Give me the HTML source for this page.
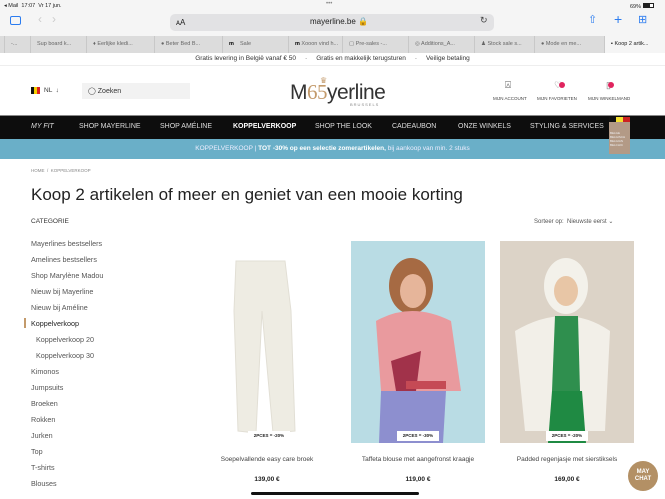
<!DOCTYPE html>
<html><head><meta charset="utf-8"><style>
*{margin:0;padding:0;box-sizing:border-box}
body{width:665px;height:499px;overflow:hidden;background:#fff;font-family:"Liberation Sans",sans-serif;color:#222;position:relative}
.a{position:absolute;white-space:nowrap}
.cat{font-size:7.2px;color:#555}
.nav span{position:absolute;top:123px;font-size:7px;color:#ddd}
.tab{position:absolute;top:36px;height:17px;border-left:1px solid #c8c8c8;font-size:5.5px;color:#666;line-height:17px;padding-left:6px}
</style></head><body>
<div class="a" style="left:0;top:0;width:665px;height:36px;background:#f5f5f5"></div>
<div class="a" style="left:4px;top:3px;font-size:5.5px;color:#222">◂ Mail &nbsp;17:07 &nbsp;Vr 17 jun.</div>
<div class="a" style="left:326px;top:1px;font-size:6px;color:#888">•••</div>
<div class="a" style="left:630px;top:3px;font-size:5.5px">69% <span style="display:inline-block;width:11px;height:5px;border:1px solid #222;background:linear-gradient(90deg,#222 65%,#fff 65%)"></span></div>
<div class="a" style="left:10px;top:16px;width:11px;height:9px;border:1.3px solid #2b7cf0;border-radius:2px"></div>
<div class="a" style="left:38px;top:12px;font-size:12px;color:#ccc">‹ &nbsp; ›</div>
<div class="a" style="left:170px;top:14px;width:324px;height:17px;background:#e2e2e4;border-radius:5px"></div>
<div class="a" style="left:176px;top:18px;font-size:8px">ᴀA</div>
<div class="a" style="left:310px;top:17px;font-size:8px;color:#222">mayerline.be 🔒</div>
<div class="a" style="left:480px;top:15px;font-size:9px;color:#444">↻</div>
<div class="a" style="left:588px;top:13px;font-size:11px;color:#2b7cf0">⇧</div>
<div class="a" style="left:614px;top:11px;font-size:14px;color:#2b7cf0">+</div>
<div class="a" style="left:638px;top:13px;font-size:11px;color:#2b7cf0">⊞</div>
<div class="a" style="left:0;top:36px;width:665px;height:17px;background:#dcdcdc"></div>
<div class="tab" style="left:4px;width:26px">-...</div>
<div class="tab" style="left:30px;width:56px">Sup board k...</div>
<div class="tab" style="left:86px;width:68px">♦ Eerlijke kledi...</div>
<div class="tab" style="left:154px;width:68px">● Beter Bed B...</div>
<div class="tab" style="left:222px;width:66px"><b style="color:#000">m</b> &nbsp;&nbsp;&nbsp;Sale</div>
<div class="tab" style="left:288px;width:66px"><b style="color:#000">m</b> Xooon vind h...</div>
<div class="tab" style="left:342px;width:66px">▢ Pre-sales -...</div>
<div class="tab" style="left:408px;width:66px">◎ Additions_A...</div>
<div class="tab" style="left:474px;width:60px">♟ Stock sale s...</div>
<div class="tab" style="left:534px;width:70px">● Mode en me...</div>
<div class="tab" style="left:604px;width:61px;background:#f5f5f5;color:#222">▪ Koop 2 artik...</div>
<div class="a" style="left:0;top:53px;width:665px;height:13px;border-bottom:1px solid #eee;font-size:6.5px;color:#333;text-align:center;line-height:12px">Gratis levering in België vanaf € 50 &nbsp;&nbsp;&nbsp;&nbsp;·&nbsp;&nbsp;&nbsp;&nbsp; Gratis en makkelijk terugsturen &nbsp;&nbsp;&nbsp;&nbsp;·&nbsp;&nbsp;&nbsp;&nbsp; Veilige betaling</div>
<div class="a" style="left:31px;top:87px;width:9px;height:7px;background:linear-gradient(90deg,#111 33%,#f5d000 33% 66%,#d22 66%)"></div>
<div class="a" style="left:44px;top:87px;font-size:6.5px;color:#333">NL &nbsp;↓</div>
<div class="a" style="left:82px;top:83px;width:108px;height:16px;background:#f2f2f2"></div>
<div class="a" style="left:88px;top:87px;font-size:7px;color:#333">◯ Zoeken</div>
<div class="a" style="left:290px;top:80px;font-size:21px;color:#333;letter-spacing:-0.5px">M<span style="color:#c39a6b;font-family:'Liberation Serif',serif">65</span>yerline</div>
<div class="a" style="left:320px;top:76px;font-size:8px;color:#c39a6b">♛</div>
<div class="a" style="left:350px;top:102px;font-size:4px;letter-spacing:1px;color:#888">BRUSSELS</div>
<div class="a" style="left:505px;top:80px;font-size:10px;color:#555">⍓</div>
<div class="a" style="left:493px;top:96px;font-size:4.5px;color:#444">MIJN ACCOUNT</div>
<div class="a" style="left:554px;top:80px;font-size:9px;color:#777">♡<span style="display:inline-block;width:6px;height:6px;border-radius:3px;background:#e0245e;margin-left:-3px"></span></div>
<div class="a" style="left:537px;top:96px;font-size:4.5px;color:#444">MIJN FAVORIETEN</div>
<div class="a" style="left:606px;top:80px;font-size:9px;color:#777">▯<span style="display:inline-block;width:6px;height:6px;border-radius:3px;background:#e0245e;margin-left:-3px"></span></div>
<div class="a" style="left:588px;top:96px;font-size:4.5px;color:#444">MIJN WINKELMAND</div>
<div class="a" style="left:0;top:115px;width:665px;height:24px;background:#0d0d0d;border-top:1px solid #888"></div>
<div class="nav">
<span style="left:31px;font-style:italic">MY FIT</span>
<span style="left:79px">SHOP MAYERLINE</span>
<span style="left:160px">SHOP AMÉLINE</span>
<span style="left:233px;color:#fff;font-weight:bold">KOPPELVERKOOP</span>
<span style="left:315px">SHOP THE LOOK</span>
<span style="left:392px">CADEAUBON</span>
<span style="left:458px">ONZE WINKELS</span>
<span style="left:530px">STYLING &amp; SERVICES</span>
</div>
<div class="a" style="left:0;top:139px;width:665px;height:20px;background:#6aafc8;font-size:6.5px;color:#eef;text-align:center;line-height:20px">KOPPELVERKOOP | <b style="color:#fff">TOT -30% op een selectie zomerartikelen,</b> bij aankoop van min. 2 stuks</div>
<div class="a" style="left:609px;top:117px;width:21px;height:37px;background:#b39a86"></div>
<div class="a" style="left:609px;top:117px;width:21px;height:5px;background:linear-gradient(90deg,#111 33%,#f5e030 33% 66%,#c22 66%)"></div>
<div class="a" style="left:610px;top:131px;font-size:3px;line-height:4px;color:#eee">BELGE<br>BELGISCH<br>BELGIAN<br>BELCHIC</div>
<div class="a" style="left:31px;top:168px;font-size:4.5px;color:#888">HOME &nbsp;/ &nbsp;KOPPELVERKOOP</div>
<div class="a" style="left:31px;top:185px;font-size:17px;color:#222">Koop 2 artikelen of meer en geniet van een mooie korting</div>
<div class="a" style="left:31px;top:218px;font-size:6.5px;color:#333">CATEGORIE</div>
<div class="a" style="left:534px;top:218px;font-size:6px;color:#555">Sorteer op: &nbsp;Nieuwste eerst ⌄</div>
<div class="a cat" style="left:31px;top:239px">Mayerlines bestsellers</div>
<div class="a cat" style="left:31px;top:255px">Amelines bestsellers</div>
<div class="a cat" style="left:31px;top:271px">Shop Marylène Madou</div>
<div class="a cat" style="left:31px;top:287px">Nieuw bij Mayerline</div>
<div class="a cat" style="left:31px;top:303px">Nieuw bij Améline</div>
<div class="a" style="left:24px;top:318px;width:2px;height:10px;background:#c39a6b"></div>
<div class="a cat" style="left:31px;top:319px;color:#222">Koppelverkoop</div>
<div class="a cat" style="left:36px;top:335px">Koppelverkoop 20</div>
<div class="a cat" style="left:36px;top:351px">Koppelverkoop 30</div>
<div class="a cat" style="left:31px;top:367px">Kimonos</div>
<div class="a cat" style="left:31px;top:383px">Jumpsuits</div>
<div class="a cat" style="left:31px;top:399px">Broeken</div>
<div class="a cat" style="left:31px;top:415px">Rokken</div>
<div class="a cat" style="left:31px;top:431px">Jurken</div>
<div class="a cat" style="left:31px;top:447px">Top</div>
<div class="a cat" style="left:31px;top:463px">T-shirts</div>
<div class="a cat" style="left:31px;top:479px">Blouses</div>
<svg class="a" style="left:200px;top:241px" width="134" height="202"><path d="M36 20 L85 20 L91 70 L95 190 L73 192 L62 70 L56 192 L38 190 L34 70 Z" fill="#eeece3" stroke="#e2dfd5"/></svg>
<div class="a" style="left:351px;top:241px;width:134px;height:202px;background:#b9dce4"></div>
<svg class="a" style="left:351px;top:241px" width="134" height="202"><ellipse cx="60" cy="45" rx="22" ry="28" fill="#a66a43"/><ellipse cx="62" cy="50" rx="13" ry="17" fill="#e6b59a"/><path d="M25 80 Q60 60 100 80 L110 150 L90 150 L85 202 L30 202 L30 150 Z" fill="#e99a9e"/><path d="M30 150 L95 150 L92 202 L28 202 Z" fill="#8d8fcf"/><path d="M40 120 L70 110 L65 150 L45 150 Z" fill="#a1324a"/><rect x="55" y="140" width="40" height="8" fill="#c54a55"/></svg>
<div class="a" style="left:500px;top:241px;width:134px;height:202px;background:#dcd3c7"></div>
<svg class="a" style="left:500px;top:241px" width="134" height="202"><ellipse cx="66" cy="45" rx="22" ry="28" fill="#f3f1ea"/><ellipse cx="66" cy="50" rx="12" ry="15" fill="#e8c6a6"/><path d="M15 90 Q66 60 110 90 L105 190 L25 190 Z" fill="#f2efe8"/><path d="M55 75 L78 75 L80 150 L52 150 Z" fill="#2f8f4e"/><path d="M52 150 L82 150 L86 202 L48 202 Z" fill="#1f8a43"/></svg>
<div class="a" style="left:248px;top:431px;width:42px;height:10px;background:#fff;font-size:4.5px;font-weight:bold;text-align:center;line-height:10px">2PCES = -20%</div>
<div class="a" style="left:397px;top:431px;width:42px;height:10px;background:#fff;font-size:4.5px;font-weight:bold;text-align:center;line-height:10px">2PCES = -30%</div>
<div class="a" style="left:546px;top:431px;width:42px;height:10px;background:#fff;font-size:4.5px;font-weight:bold;text-align:center;line-height:10px">2PCES = -20%</div>
<div class="a" style="left:200px;top:456px;width:134px;text-align:center;font-size:6.5px;color:#444">Soepelvallende easy care broek</div>
<div class="a" style="left:351px;top:456px;width:134px;text-align:center;font-size:6.5px;color:#444">Taffeta blouse met aangefronst kraagje</div>
<div class="a" style="left:500px;top:456px;width:134px;text-align:center;font-size:6.5px;color:#444">Padded regenjasje met sierstiksels</div>
<div class="a" style="left:200px;top:476px;width:134px;text-align:center;font-size:6.5px;font-weight:bold">139,00 €</div>
<div class="a" style="left:351px;top:476px;width:134px;text-align:center;font-size:6.5px;font-weight:bold">119,00 €</div>
<div class="a" style="left:500px;top:476px;width:134px;text-align:center;font-size:6.5px;font-weight:bold">169,00 €</div>
<div class="a" style="left:628px;top:461px;width:30px;height:30px;border-radius:15px;background:#b39065;color:#fff;font-size:6px;font-weight:bold;text-align:center;line-height:7px;padding-top:8px">MAY<br>CHAT</div>
<div class="a" style="left:251px;top:492px;width:168px;height:3px;border-radius:2px;background:#111"></div>
</body></html>
